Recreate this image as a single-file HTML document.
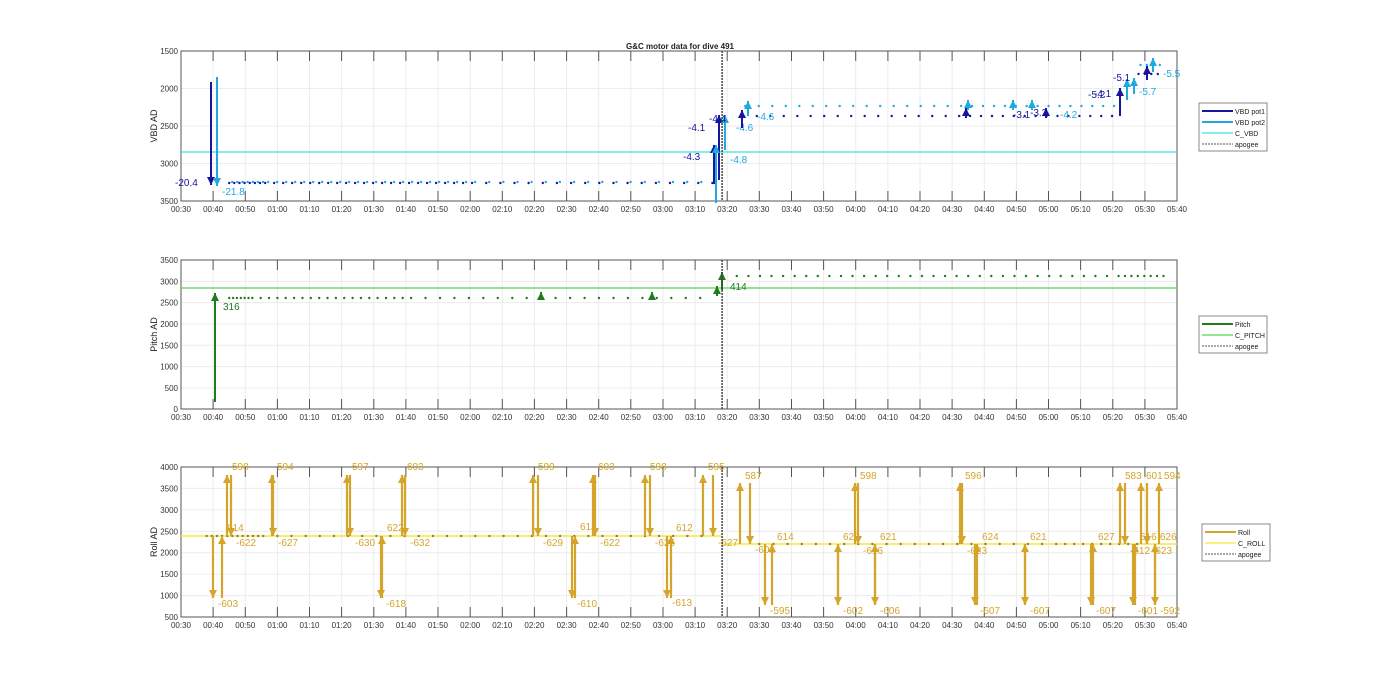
<!DOCTYPE html>
<html><head><meta charset="utf-8"><style>
html,body{margin:0;padding:0;background:#fff;}
svg{display:block;font-family:"Liberation Sans",Arial,sans-serif;}
</style></head><body>
<svg id="s" width="1400" height="693" xmlns="http://www.w3.org/2000/svg"></svg>
<script>
var S=document.getElementById('s'),h='';
var X0=181,PX=3.213;
function X(t){return X0+(t-30)*PX;}
function fmt(t){var hh=Math.floor(t/60),mm=t%60;return (hh<10?'0':'')+hh+':'+(mm<10?'0':'')+mm;}
function axes(top,bot,yt,ylab){
  for(var t=40;t<340;t+=10){var x=X(t).toFixed(1);h+='<line x1="'+x+'" y1="'+top+'" x2="'+x+'" y2="'+bot+'" stroke="#ececec" stroke-width="1"/>';
   h+='<line x1="'+x+'" y1="'+top+'" x2="'+x+'" y2="'+(top+10)+'" stroke="#555"/><line x1="'+x+'" y1="'+bot+'" x2="'+x+'" y2="'+(bot-10)+'" stroke="#555"/>';}
  yt.forEach(function(p){h+='<line x1="'+X0+'" y1="'+p[0]+'" x2="1177" y2="'+p[0]+'" stroke="#ececec"/>';
   h+='<text x="'+(X0-3)+'" y="'+(p[0]+3)+'" font-size="8" text-anchor="end" fill="#333">'+p[1]+'</text>';});
  for(var t=30;t<=340;t+=10){h+='<text x="'+X(t).toFixed(1)+'" y="'+(bot+11)+'" font-size="8" text-anchor="middle" fill="#333">'+fmt(t)+'</text>';}
  h+='<rect x="'+X0+'" y="'+top+'" width="996" height="'+(bot-top)+'" fill="none" stroke="#555" stroke-width="1"/>';
  h+='<text transform="translate(157,'+((top+bot)/2)+') rotate(-90)" font-size="9" text-anchor="middle" fill="#222">'+ylab+'</text>';
}
function ln(x1,y1,x2,y2,c,w,d){h+='<line x1="'+x1+'" y1="'+y1+'" x2="'+x2+'" y2="'+y2+'" stroke="'+c+'" stroke-width="'+(w||1)+'"'+(d?' stroke-dasharray="'+d+'"':'')+'/>';}
function arr(x,y1,y2,c,w){ln(x,y1,x,y2,c,w||2);var d=y2>y1?1:-1;h+='<polygon points="'+(x-4)+','+(y2-d*8)+' '+(x+4)+','+(y2-d*8)+' '+x+','+y2+'" fill="'+c+'"/>';}
function tx(x,y,s,c,fs){h+='<text x="'+x+'" y="'+y+'" font-size="'+(fs||10)+'" fill="'+c+'">'+s+'</text>';}
function dot(x,y,c){h+='<circle cx="'+x.toFixed(1)+'" cy="'+y+'" r="1.2" fill="'+c+'"/>';}
function legend(x,y,items){var hh=items.length*11+4;h+='<rect x="'+x+'" y="'+y+'" width="68" height="'+hh+'" fill="#fff" stroke="#888"/>';
 items.forEach(function(it,i){var yy=y+8+i*11;ln(x+3,yy,x+34,yy,it[1],it[2]||2,it[3]);tx(x+36,yy+3,it[0],'#222',7);});}
var AP=X(198.4).toFixed(1);
h+='<text x="680" y="49" font-size="8" font-weight="bold" text-anchor="middle" fill="#222">G&amp;C motor data for dive 491</text>';
// Plot 1
axes(51,201,[[51,'1500'],[88.5,'2000'],[126,'2500'],[163.5,'3000'],[201,'3500']],'VBD AD');
var DB='#1515a0',LB='#20a8e0';
ln(X0,152,1177,152,'#3ee0e0',1.3);
for(var t=45;t<197;t+=(t<55?1.6:(t<120?2.8:4.4))){dot(X(t),183,DB);dot(X(t)+3,182,LB);}
for(var t=205;t<323;t+=(t<270?4.2:3.4)){dot(X(t),116,DB);dot(X(t)+2,106,LB);}
for(var t=328;t<335;t+=2){dot(X(t),74,DB);dot(X(t)+2,65,LB);}
arr(211,82,185,DB);arr(217,77,186,LB);
tx(175,186,'-20.4',DB);tx(222,195,'-21.8',LB);
arr(714,184,145,DB);arr(719,180,115,DB);arr(716,203,145,LB);arr(725,150,115,LB);
tx(683,160,'-4.3',DB);tx(688,131,'-4.1',DB);tx(709,122,'-4.4',DB);tx(730,163,'-4.8',LB);tx(736,131,'-4.6',LB);
arr(742,128,110,DB);arr(748,116,101,LB);tx(757,120,'-4.6',LB);
arr(966,118,108,DB);arr(968,110,100,LB);
arr(1046,118,108,DB);arr(1013,110,100,LB);arr(1032,110,100,LB);
tx(1013,118,'-3.1',DB);tx(1030,116,'-3.2',DB);tx(1060,118,'-4.2',LB);tx(1088,98,'-5.2',DB);tx(1094,97,'-4.1',DB);
arr(1120,116,88,DB);arr(1127,100,79,LB);arr(1134,94,78,LB);
tx(1113,81,'-5.1',DB);tx(1139,95,'-5.7',LB);
arr(1147,80,66,DB);arr(1153,72,58,LB);tx(1163,77,'-5.5',LB);
legend(1199,103,[['VBD pot1',DB],['VBD pot2',LB],['C_VBD','#3ee0e0',1.3],['apogee','#555',1,'2,1']]);
ln(AP,51,AP,201,'#444',1.5,'2,1');
// Plot 2
axes(260,409,[[260,'3500'],[281.3,'3000'],[302.6,'2500'],[323.9,'2000'],[345.3,'1500'],[366.6,'1000'],[387.9,'500'],[409,'0']],'Pitch AD');
var DG='#1e7b1e',LG='#55d455';
ln(X0,288,1177,288,LG,1.3);
for(var t=45;t<196;t+=(t<52?1.2:(t<100?2.6:4.5)))dot(X(t),298,DG);
for(var t=203;t<337;t+=(t<320?3.6:2))dot(X(t),276,DG);
arr(215,402,293,DG);tx(223,310,'316',DG);
arr(541,300,292,DG);arr(652,300,292,DG);arr(717,296,286,DG);arr(722,290,272,DG);tx(730,290,'414',DG);
ln(AP,260,AP,409,'#444',1.5,'2,1');
legend(1199,316,[['Pitch',DG],['C_PITCH',LG,1.3],['apogee','#555',1,'2,1']]);
// Plot 3
axes(467,617,[[467,'4000'],[488.4,'3500'],[509.9,'3000'],[531.3,'2500'],[552.7,'2000'],[574.1,'1500'],[595.6,'1000'],[617,'500']],'Roll AD');
var GD='#d4a52a',YL='#f2ea3a';
ln(X0,536,AP,536,YL,1.5);ln(AP,544,1177,544,YL,1.5);
for(var t=38;t<195;t+=(t<55?1.6:4.4))dot(X(t),536,'#8a8040');
for(var t=210;t<330;t+=(t<300?4.4:2.8))dot(X(t),544,'#8a8040');
var ev=[[232,470,'598','t'],[227,531,'614','b'],[236,546,'-622','m'],[218,607,'-603','d'],[277,470,'594','t'],[278,546,'-627','m'],[352,470,'597','t'],[355,546,'-630','m'],[387,531,'622','b'],[386,607,'-618','d'],[407,470,'603','t'],[410,546,'-632','m'],[538,470,'599','t'],[543,546,'-629','m'],[580,530,'617','b'],[577,607,'-610','d'],[598,470,'603','t'],[600,546,'-622','m'],[650,470,'598','t'],[655,546,'-625','m'],[676,531,'612','b'],[672,606,'-613','d'],[708,470,'595','t'],[718,546,'-627','m'],
[745,479,'587','t'],[755,553,'-601','m'],[777,540,'614','b'],[770,614,'-595','d'],[843,540,'620','b'],[843,614,'-602','d'],[860,479,'598','t'],[863,554,'-616','m'],[880,540,'621','b'],[880,614,'-606','d'],[965,479,'596','t'],[967,554,'-623','m'],[982,540,'624','b'],[980,614,'-607','d'],[1030,540,'621','b'],[1030,614,'-607','d'],[1098,540,'627','b'],[1096,614,'-607','d'],[1125,479,'583','t'],[1130,554,'-612','m'],[1140,540,'616','b'],[1138,614,'-601','d'],[1146,479,'601','t'],[1152,554,'-623','m'],[1160,540,'626','b'],[1164,479,'594','t'],[1160,614,'-592','d']];
ev.forEach(function(e){var after=e[0]>722,base=after?544:536,top=after?483:475,bot=after?605:598,x=e[0]-5;
 if(e[3]=='t')arr(x,base,top,GD,2.2);else if(e[3]=='m')arr(x,top,base,GD,2.2);else if(e[3]=='d')arr(x,base,bot,GD,2.2);else arr(x,bot,base,GD,2.2);
 tx(e[0],e[1],e[2],GD,10);});
ln(AP,467,AP,617,'#444',1.5,'2,1');
legend(1202,524,[['Roll',GD],['C_ROLL',YL,1.3],['apogee','#555',1,'2,1']]);
S.innerHTML=h;
</script>
</body></html>
